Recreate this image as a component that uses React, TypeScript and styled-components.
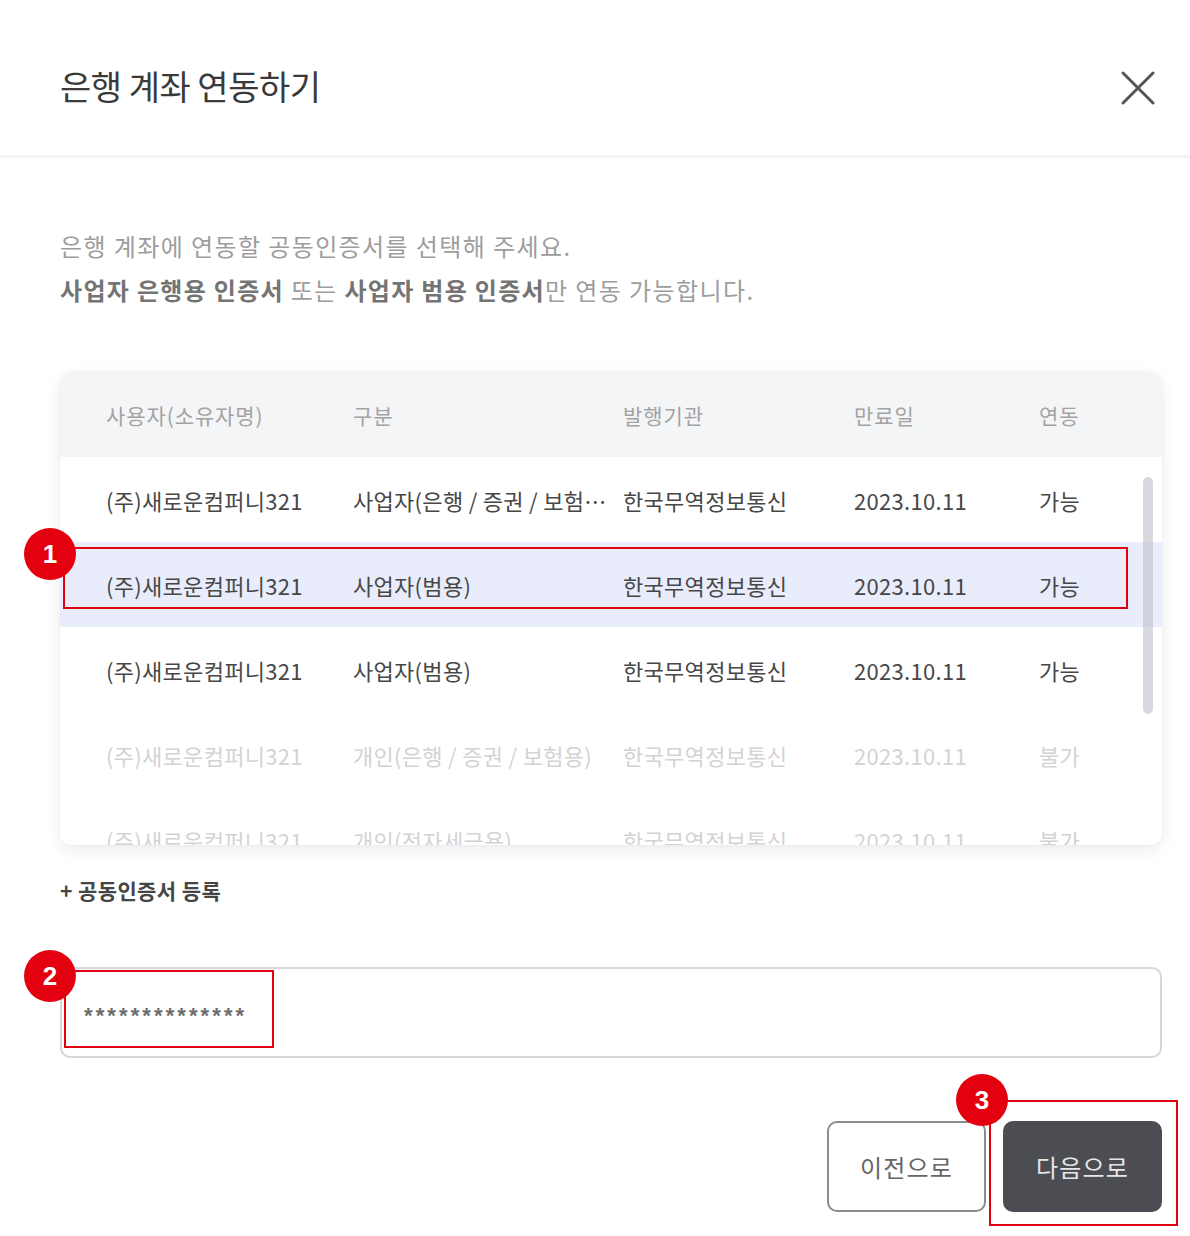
import React from "react";
import styled, { createGlobalStyle } from "styled-components";

const GlobalStyle = createGlobalStyle`
  html, body {
    margin: 0;
    padding: 0;
    background: #fff;
  }
  body {
    font-family: "Noto Sans CJK KR", "Noto Sans", sans-serif;
    color: #3c3c3c;
  }
`;

type Cert = {
  owner: string;
  kind: string;
  issuer: string;
  expires: string;
  link: string;
  disabled?: boolean;
  selected?: boolean;
};

const CERTS: Cert[] = [
  { owner: "(주)새로운컴퍼니321", kind: "사업자(은행 / 증권 / 보험용)", issuer: "한국무역정보통신", expires: "2023.10.11", link: "가능" },
  { owner: "(주)새로운컴퍼니321", kind: "사업자(범용)", issuer: "한국무역정보통신", expires: "2023.10.11", link: "가능", selected: true },
  { owner: "(주)새로운컴퍼니321", kind: "사업자(범용)", issuer: "한국무역정보통신", expires: "2023.10.11", link: "가능" },
  { owner: "(주)새로운컴퍼니321", kind: "개인(은행 / 증권 / 보험용)", issuer: "한국무역정보통신", expires: "2023.10.11", link: "불가", disabled: true },
  { owner: "(주)새로운컴퍼니321", kind: "개인(전자세금용)", issuer: "한국무역정보통신", expires: "2023.10.11", link: "불가", disabled: true },
];

function App() {
  return (
    <Modal>
      <GlobalStyle />
      <Header>
        <Title>은행 계좌 연동하기</Title>
        <CloseButton aria-label="닫기">
          <svg width="36" height="36" viewBox="0 0 36 36">
            <path d="M3 3 L33 33 M33 3 L3 33" stroke="#555" strokeWidth="3" strokeLinecap="round" />
          </svg>
        </CloseButton>
      </Header>

      <Body>
        <Desc>
          <DescLine>은행 계좌에 연동할 공동인증서를 선택해 주세요.</DescLine>
          <DescLine>
            <Strong>사업자 은행용 인증서</Strong> 또는 <Strong>사업자 범용 인증서</Strong>만 연동 가능합니다.
          </DescLine>
        </Desc>

        <TableCard>
          <HeadRow>
            <HeadCell>사용자(소유자명)</HeadCell>
            <HeadCell>구분</HeadCell>
            <HeadCell>발행기관</HeadCell>
            <HeadCell>만료일</HeadCell>
            <HeadCell>연동</HeadCell>
          </HeadRow>
          <RowList>
            {CERTS.map((c, i) => (
              <Row key={i} $selected={c.selected} $disabled={c.disabled}>
                <Cell>{c.owner}</Cell>
                <Cell $clip>{c.kind}</Cell>
                <Cell>{c.issuer}</Cell>
                <Cell>{c.expires}</Cell>
                <Cell>{c.link}</Cell>
              </Row>
            ))}
            <ScrollThumb />
          </RowList>
        </TableCard>

        <AddLink>+ 공동인증서 등록</AddLink>

        <PasswordBox>
          <Masked>**************</Masked>
        </PasswordBox>

        <Actions>
          <OutlineButton>이전으로</OutlineButton>
          <SolidButton>다음으로</SolidButton>
        </Actions>
      </Body>

      <Mark style={{ left: 63, top: 547, width: 1065, height: 62 }} />
      <Badge style={{ left: 24, top: 528 }}>1</Badge>
      <Mark style={{ left: 64, top: 970, width: 210, height: 78 }} />
      <Badge style={{ left: 24, top: 950 }}>2</Badge>
      <Mark style={{ left: 989, top: 1100, width: 189, height: 126 }} />
      <Badge style={{ left: 956, top: 1074 }}>3</Badge>
    </Modal>
  );
}

export default App;

const Modal = styled.div`
  position: relative;
  width: 1190px;
  min-height: 1236px;
  background: #fff;
`;

const Header = styled.div`
  height: 158px;
  display: flex;
  align-items: center;
  justify-content: space-between;
  padding: 20px 34px 0 60px;
  border-bottom: 3px solid #f4f4f5;
  box-sizing: border-box;
`;

const Title = styled.h1`
  margin: 0;
  font-size: 34px;
  font-weight: 400;
  color: #3a3a3a;
  letter-spacing: -0.5px;
  padding-bottom: 4px;
`;

const CloseButton = styled.button`
  border: 0;
  background: none;
  padding: 0;
  width: 36px;
  height: 36px;
  display: flex;
  cursor: pointer;
`;

const Body = styled.div`
  padding: 66px 28px 0 60px;
  display: flex;
  flex-direction: column;
`;

const Desc = styled.div`
  display: flex;
  flex-direction: column;
  margin-bottom: 60px;
`;

const DescLine = styled.p`
  margin: 0;
  font-size: 24px;
  line-height: 44px;
  color: #9d9d9d;
  letter-spacing: 1.4px;
`;

const Strong = styled.b`
  font-weight: 700;
  color: #747474;
  letter-spacing: 1.3px;
`;

const TableCard = styled.div`
  border-radius: 12px;
  overflow: hidden;
  background: #fff;
  box-shadow: 0 6px 18px rgba(0, 0, 0, 0.07), 0 0 4px rgba(0, 0, 0, 0.04);
`;

const COLUMNS = "247px 270px 231px 185px 1fr";

const HeadRow = styled.div`
  display: grid;
  grid-template-columns: ${COLUMNS};
  align-items: center;
  height: 85px;
  padding-left: 46px;
  background: #f4f5f7;
`;

const HeadCell = styled.div`
  font-size: 21px;
  color: #a3a3a3;
  letter-spacing: 0.9px;
`;

const RowList = styled.div`
  position: relative;
  height: 388px;
  overflow: hidden;
`;

const Row = styled.div<{ $selected?: boolean; $disabled?: boolean }>`
  display: grid;
  grid-template-columns: ${COLUMNS};
  align-items: center;
  height: 85px;
  padding-left: 46px;
  background: ${(p) => (p.$selected ? "#e9ecfb" : "#fff")};
  color: ${(p) => (p.$disabled ? "#d3d3d5" : "#474747")};
`;

const Cell = styled.div<{ $clip?: boolean }>`
  font-size: 22px;
  letter-spacing: 0.3px;
  white-space: nowrap;
  overflow: hidden;
  text-overflow: ${(p) => (p.$clip ? "ellipsis" : "clip")};
  padding-right: ${(p) => (p.$clip ? "14px" : "0")};
`;

const ScrollThumb = styled.div`
  position: absolute;
  right: 9px;
  top: 20px;
  width: 10px;
  height: 237px;
  border-radius: 5px;
  background: rgba(190, 192, 200, 0.6);
`;

const AddLink = styled.div`
  margin-top: 30px;
  font-size: 21px;
  line-height: 30px;
  font-weight: 700;
  color: #454545;
  letter-spacing: 0.4px;
`;

const PasswordBox = styled.div`
  margin-top: 62px;
  height: 91px;
  border: 2px solid #d5d7dc;
  border-radius: 10px;
  box-sizing: border-box;
  display: flex;
  align-items: center;
  padding-left: 22px;
`;

const Masked = styled.span`
  font-family: "Liberation Sans", Arial, sans-serif;
  font-size: 22px;
  font-weight: 700;
  letter-spacing: 3.1px;
  color: #6d6d6d;
  padding-top: 6px;
`;

const Actions = styled.div`
  margin-top: 63px;
  display: flex;
  justify-content: flex-end;
  gap: 17px;
`;

const ButtonBase = styled.button`
  width: 159px;
  height: 91px;
  border-radius: 10px;
  box-sizing: border-box;
  font-family: "Noto Sans CJK KR", "Noto Sans", sans-serif;
  font-size: 24px;
  letter-spacing: 1.2px;
  cursor: pointer;
`;

const OutlineButton = styled(ButtonBase)`
  background: #fff;
  border: 2px solid #8c8c8c;
  color: #666;
`;

const SolidButton = styled(ButtonBase)`
  background: #4c4d53;
  border: 0;
  color: #e6e6e6;
`;

const Mark = styled.div`
  position: absolute;
  border: 2px solid #e3000f;
  box-sizing: border-box;
  pointer-events: none;
`;

const Badge = styled.div`
  position: absolute;
  width: 52px;
  height: 52px;
  border-radius: 50%;
  background: #e3000f;
  color: #fff;
  font-family: "Liberation Sans", Arial, sans-serif;
  font-weight: 700;
  font-size: 26px;
  display: flex;
  align-items: center;
  justify-content: center;
`;
